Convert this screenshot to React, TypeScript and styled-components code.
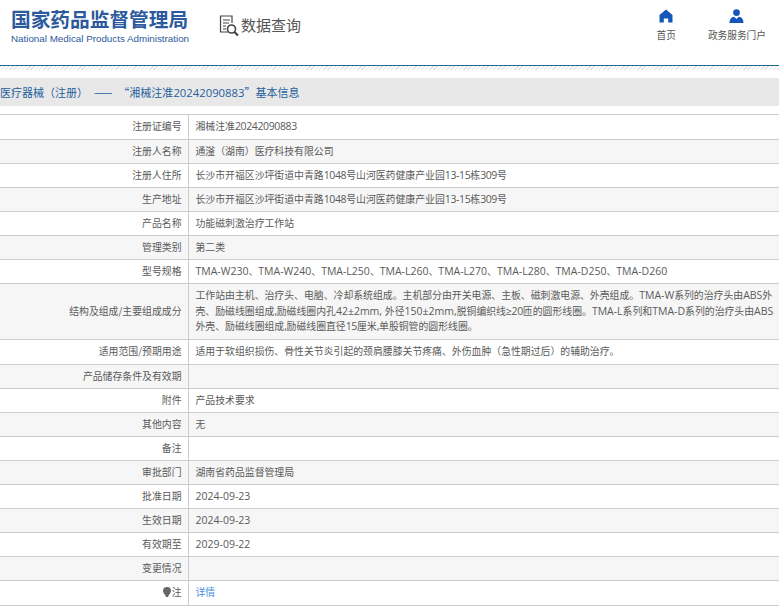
import React from 'react';
import styled, { createGlobalStyle } from 'styled-components';

const Global = createGlobalStyle`
  html, body { margin: 0; padding: 0; background: #fff; }
  body { font-family: "Noto Sans CJK SC", "Noto Sans", sans-serif; color: #5a5a5a; overflow: hidden; }
`;
const Page = styled.div`width: 779px; height: 613px; overflow: hidden;`;
const Header = styled.header`
  height: 65px; display: flex; align-items: flex-start; border-bottom: 1px solid #1f6c96;
`;
const Logo = styled.div`margin: 7px 0 0 11px; width: 178px;`;
const LogoTitle = styled.div`font-size: 19.7px; line-height: 24px; font-weight: 700; color: #2c5a9c; white-space: nowrap;`;
const LogoSub = styled.div`font-family: "Liberation Sans", sans-serif; font-size: 9.8px; line-height: 12px; margin-top: 2px; color: #2c5a9c; white-space: nowrap;`;
const Query = styled.div`margin: 14px 0 0 30px; display: flex; align-items: center; gap: 1px; font-size: 15px; line-height: 22px; color: #555;`;
const QueryText = styled.span`padding-bottom: 2px;`;
const Nav = styled.nav`margin-left: auto; display: flex; margin-right: 13px; margin-top: 9px; gap: 32px;`;
const NavItem = styled.div`display: flex; flex-direction: column; align-items: center; font-size: 9.7px; line-height: 14px; color: #555; gap: 5px;`;
const Hatch = styled.div`
  height: 4px;
  background: repeating-linear-gradient(135deg, #dfe3e6 0 1px, #fff 1px 3px);
`;
const TitleBar = styled.div`
  margin-top: 8px; height: 28px; background: #e8e8e8; color: #1f5f9e; font-size: 11px; line-height: 28px; white-space: pre; word-spacing: 3.5px;
`;
const TitleNum = styled.span`font-family: "Open Sans", sans-serif; font-size: 11.3px;`;
const Table = styled.table`
  margin-top: 8px; width: 779px; border-collapse: collapse; table-layout: fixed; font-size: 9.87px; line-height: 15.5px;
  border-top: 1px solid #ccc; border-bottom: 1px solid #ccc;
`;
const Row = styled.tr<{ $alt: boolean; $h: number }>`
  background: ${p => (p.$alt ? '#f6f6f6' : '#fff')};
  height: ${p => p.$h}px;
`;
const Label = styled.td`
  width: 188px; box-sizing: border-box; text-align: right; padding: 0 6px 0 0; border: 1px solid #ccc; border-left: none; white-space: nowrap;
`;
const Value = styled.td`
  padding: 0 3px 0 7px; border: 1px solid #ccc; border-right: none;
`;
const Latin = styled.span<{ $tight: boolean }>`
  font-family: "Open Sans", sans-serif; font-size: 10.5px; line-height: 14px;
  letter-spacing: ${p => (p.$tight ? '-0.38px' : '0')};
`;
const Link = styled.a`color: #4a90e2; text-decoration: none;`;
const Pin = styled.svg`vertical-align: -1px; margin-right: 1px;`;

const isTight = (s: string) => !/[A-Za-z]/.test(s) && !/^\d{4}-\d{2}-\d{2}$/.test(s);

function Mixed({ text }: { text: string }) {
  const parts = text.split(/([A-Za-z0-9\-+±≥,. ]+)/);
  return <>{parts.map((p, i) => (i % 2 ? <Latin key={i} $tight={isTight(p)}>{p}</Latin> : p))}</>;
}

const rows: [string, string, number][] = [
  ['注册证编号', '湘械注准20242090883', 25],
  ['注册人名称', '通滏（湖南）医疗科技有限公司', 24],
  ['注册人住所', '长沙市开福区沙坪街道中青路1048号山河医药健康产业园13-15栋309号', 24],
  ['生产地址', '长沙市开福区沙坪街道中青路1048号山河医药健康产业园13-15栋309号', 24],
  ['产品名称', '功能磁刺激治疗工作站', 24],
  ['管理类别', '第二类', 24],
  ['型号规格', 'TMA-W230、TMA-W240、TMA-L250、TMA-L260、TMA-L270、TMA-L280、TMA-D250、TMA-D260', 24],
  ['结构及组成/主要组成成分', '工作站由主机、治疗头、电脑、冷却系统组成。主机部分由开关电源、主板、磁刺激电源、外壳组成。TMA-W系列的治疗头由ABS外壳、励磁线圈组成,励磁线圈内孔42±2mm, 外径150±2mm,脱铜编织线≥20匝的圆形线圈。TMA-L系列和TMA-D系列的治疗头由ABS外壳、励磁线圈组成,励磁线圈直径15厘米,单股铜管的圆形线圈。', 56],
  ['适用范围/预期用途', '适用于软组织损伤、骨性关节炎引起的颈肩腰膝关节疼痛、外伤血肿（急性期过后）的辅助治疗。', 25],
  ['产品储存条件及有效期', '', 24],
  ['附件', '产品技术要求', 24],
  ['其他内容', '无', 24],
  ['备注', '', 24],
  ['审批部门', '湖南省药品监督管理局', 24],
  ['批准日期', '2024-09-23', 24],
  ['生效日期', '2024-09-23', 24],
  ['有效期至', '2029-09-22', 24],
  ['变更情况', '', 24],
];

export default function App() {
  return (
    <Page>
      <Global />
      <Header>
        <Logo>
          <LogoTitle>国家药品监督管理局</LogoTitle>
          <LogoSub>National Medical Products Administration</LogoSub>
        </Logo>
        <Query>
          <svg width="21" height="22" viewBox="0 0 21 22" fill="none" stroke="#444" strokeWidth="1.2">
            <path d="M9 17H1.500V1h11.500v7" />
            <path d="M4 5h7M4 8h6M4 11h3M4 14h3" />
            <circle cx="12.500" cy="14" r="4" strokeWidth="1.600" />
            <path d="M15.500 17l3.500 3.500" strokeWidth="2.200" />
          </svg>
          <QueryText>数据查询</QueryText>
        </Query>
        <Nav>
          <NavItem>
            <svg width="14" height="14" viewBox="0 0 14 14"><path fill="#1557b8" d="M7 .5 13.500 6v7.500H9.200V9.600H4.800v3.900H.5V6z" /></svg>
            <span>首页</span>
          </NavItem>
          <NavItem>
            <svg width="15" height="14" viewBox="0 0 15 14"><circle cx="7.500" cy="3.600" r="3.400" fill="#1557b8" /><path fill="#1557b8" d="M.5 14c0-3.600 2-6 4.600-6.200L7.500 10l2.400-2.200C12.500 8 14.500 10.400 14.500 14z" /></svg>
            <span>政务服务门户</span>
          </NavItem>
        </Nav>
      </Header>
      <Hatch />
      <TitleBar>医疗器械（注册） —— “湘械注准<TitleNum>20242090883</TitleNum>”基本信息</TitleBar>
      <Table>
        <colgroup><col width="188" /><col /></colgroup>
        <tbody>
          {rows.map(([k, v, h], i) => (
            <Row key={k} $alt={i % 2 === 1} $h={h}>
              <Label><Mixed text={k} /></Label>
              <Value><Mixed text={v} /></Value>
            </Row>
          ))}
          <Row $alt={false} $h={25}>
            <Label>
              <Pin width="8" height="10" viewBox="0 0 8 10"><path fill="#666" d="M4 0a4 4 0 0 1 4 4c0 2-2 3-3 6H3C2 7 0 6 0 4a4 4 0 0 1 4-4z" /></Pin>注
            </Label>
            <Value><Link href="#">详情</Link></Value>
          </Row>
        </tbody>
      </Table>
    </Page>
  );
}
